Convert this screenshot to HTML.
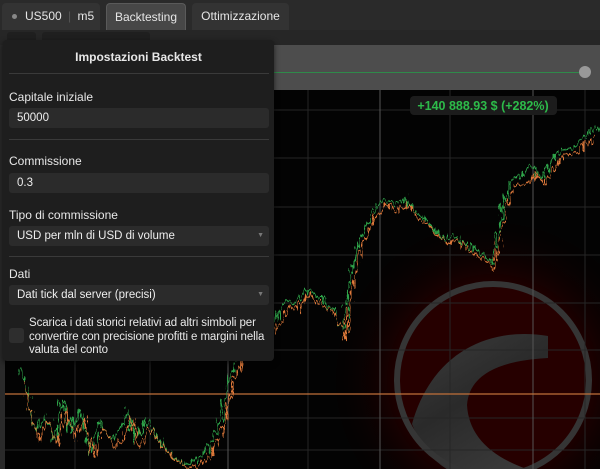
<!DOCTYPE html>
<html><head><style>
*{margin:0;padding:0;box-sizing:border-box}
html,body{width:600px;height:469px;overflow:hidden}
body{background:#2a2a2a;font-family:"Liberation Sans",sans-serif;position:relative;color:#ddd}
.tab{position:absolute;top:3px;height:27px;border-radius:4px 4px 0 0;background:#333;font-size:12px;line-height:27px;color:#e6e6e6}
.abs{position:absolute}
.lbl{position:absolute;left:9px;font-size:12px;color:#e8e8e8}
.inp{position:absolute;left:9px;width:260px;height:20px;background:#2b2b2b;border-radius:3px;font-size:11.5px;line-height:20px;padding-left:8px;color:#eee}
.arr{position:absolute;right:5px;top:0;font-size:7px;color:#777}
.sep{position:absolute;left:9px;width:260px;height:1px;background:#3a3a3a}
</style></head><body>
<div class="tab" style="left:2px;width:98px;padding-left:10px"><span style="display:inline-block;width:5px;height:5px;border-radius:50%;background:#888;vertical-align:middle;margin-right:8px"></span>US500 <span style="color:#555;margin:0 3px">|</span> m5</div>
<div class="tab" style="left:106px;width:80px;background:#474747;border:1px solid #5a5a5a;border-bottom:none;text-align:center">Backtesting</div>
<div class="tab" style="left:192px;width:97px;text-align:center">Ottimizzazione</div>
<div class="abs" style="left:0;top:30px;width:600px;height:15px;background:#262626"></div>
<div class="abs" style="left:7px;top:32px;width:29px;height:12px;background:#1f1f1f;border-radius:3px"></div>
<div class="abs" style="left:42px;top:32px;width:108px;height:12px;background:#1f1f1f;border-radius:3px"></div>
<div class="abs" style="left:274px;top:45px;width:326px;height:45px;background:#4d4d4d"></div>
<div class="abs" style="left:274px;top:72px;width:310px;height:1px;background:#2f8a4a"></div>
<div class="abs" style="left:579px;top:66px;width:12px;height:12px;border-radius:50%;background:#999"></div>
<svg class="abs" style="left:5px;top:90px;display:block" width="595" height="379" viewBox="5 90 595 379">
<defs><radialGradient id="g" cx="493" cy="380" r="170" gradientUnits="userSpaceOnUse"><stop offset="0" stop-color="#2e0000"/><stop offset="0.55" stop-color="#200000"/><stop offset="1" stop-color="#000" stop-opacity="0"/></radialGradient>
<linearGradient id="lg" x1="0" y1="0" x2="0.6" y2="1"><stop offset="0" stop-color="#3c3c3c"/><stop offset="0.5" stop-color="#2a2a2a"/><stop offset="1" stop-color="#3a3a3a"/></linearGradient>
<filter id="j" x="-5%" y="-10%" width="110%" height="120%"><feTurbulence type="fractalNoise" baseFrequency="0.35 0.08" numOctaves="2" seed="3"/><feDisplacementMap in="SourceGraphic" scale="14" xChannelSelector="R" yChannelSelector="G"/></filter></defs>
<rect x="5" y="90" width="595" height="379" fill="#030303"/>
<circle cx="493" cy="380" r="175" fill="url(#g)"/>
<circle cx="493" cy="380" r="95" fill="#260000"/>
<path d="M548,336 C490,326 432,352 412,424 Q430,470 470,478 L560,478 Q470,460 467,405 Q470,362 548,358 Z" fill="url(#lg)"/>
<circle cx="493" cy="380" r="96" fill="none" stroke="#353535" stroke-width="6"/>
<g stroke="#262626" stroke-width="1">
<line x1="5" y1="110" x2="600" y2="110"/><line x1="5" y1="158" x2="600" y2="158"/><line x1="5" y1="207" x2="600" y2="207"/><line x1="5" y1="255" x2="600" y2="255"/><line x1="5" y1="303" x2="600" y2="303"/><line x1="5" y1="350" x2="600" y2="350"/><line x1="5" y1="418" x2="600" y2="418"/><line x1="5" y1="450" x2="600" y2="450"/>
<line x1="75" y1="90" x2="75" y2="469"/><line x1="150" y1="90" x2="150" y2="469"/><line x1="308" y1="90" x2="308" y2="469"/><line x1="450" y1="90" x2="450" y2="469"/><line x1="585" y1="90" x2="585" y2="469"/></g>
<g stroke="#555" stroke-width="1"><line x1="228" y1="90" x2="228" y2="469"/><line x1="380" y1="90" x2="380" y2="469"/><line x1="533" y1="90" x2="533" y2="469"/></g>
<line x1="5" y1="394" x2="600" y2="394" stroke="#c0703a" stroke-width="1.2"/>
<g filter="url(#j)">
<polyline fill="none" stroke="#2fa34a" stroke-width="1.6" points="20,370 28,395 35,430 45,415 55,440 62,400 70,430 80,410 90,450 100,420 110,440 120,430 128,410 135,440 145,420 160,440 170,455 185,465 200,458 212,440 220,420 228,380 236,360 244,330 252,320 262,330 275,320 285,300 295,305 305,290 315,295 325,300 335,310 343,335 350,280 358,245 366,225 375,210 385,200 395,205 405,198 415,212 425,218 435,230 445,240 455,236 465,244 475,250 485,255 492,262 498,230 505,200 512,180 522,175 532,168 542,178 552,160 562,150 572,148 582,140 592,130 600,128"/>
<polyline fill="none" stroke="#e07a3a" stroke-width="1.4" points="22,380 30,405 38,440 48,420 58,445 66,410 74,438 84,418 94,455 104,428 114,448 124,438 132,418 140,448 150,428 164,448 175,460 190,468 204,462 216,446 224,425 232,388 240,368 248,338 256,326 266,338 278,326 288,308 298,310 308,296 318,302 328,306 338,318 345,340 352,290 360,252 369,232 378,215 388,206 398,212 408,204 418,220 428,224 438,236 448,244 458,240 468,250 478,256 488,262 494,268 500,238 507,206 515,186 525,182 535,174 545,184 555,166 565,156 575,154 585,146 595,136"/>
</g>
<rect x="410" y="96" width="147" height="19" rx="4" fill="#1c1c1c"/>
<text x="483" y="110" text-anchor="middle" font-family="Liberation Sans" font-size="12.5" font-weight="bold" fill="#2dbb4a">+140 888.93 $ (+282%)</text>
</svg>
<div class="abs" style="left:3px;top:40px;width:271px;height:321px;background:#1e1e1e;border-radius:4px;box-shadow:0 2px 6px rgba(0,0,0,.6)">
<div class="abs" style="left:0;top:10px;width:271px;text-align:center;font-size:12px;font-weight:bold;color:#e8e8e8">Impostazioni Backtest</div>
<div class="sep" style="left:6px;top:33px"></div>
<div class="lbl" style="left:6px;top:50px">Capitale iniziale</div>
<div class="inp" style="left:6px;top:68px">50000</div>
<div class="sep" style="left:6px;top:99px"></div>
<div class="lbl" style="left:6px;top:114px">Commissione</div>
<div class="inp" style="left:6px;top:133px">0.3</div>
<div class="lbl" style="left:6px;top:168px">Tipo di commissione</div>
<div class="inp" style="left:6px;top:186px">USD per mln di USD di volume<span class="arr">▼</span></div>
<div class="sep" style="left:6px;top:216px"></div>
<div class="lbl" style="left:6px;top:227px">Dati</div>
<div class="inp" style="left:6px;top:245px">Dati tick dal server (precisi)<span class="arr">▼</span></div>
<div class="abs" style="left:6px;top:288px;width:15px;height:15px;background:#2e2e2e;border-radius:3px"></div>
<div class="abs" style="left:26px;top:277px;width:248px;font-size:11.5px;line-height:13.5px;color:#e8e8e8;letter-spacing:-0.1px">Scarica i dati storici relativi ad altri simboli per convertire con precisione profitti e margini nella valuta del conto</div>
</div>
</body></html>
